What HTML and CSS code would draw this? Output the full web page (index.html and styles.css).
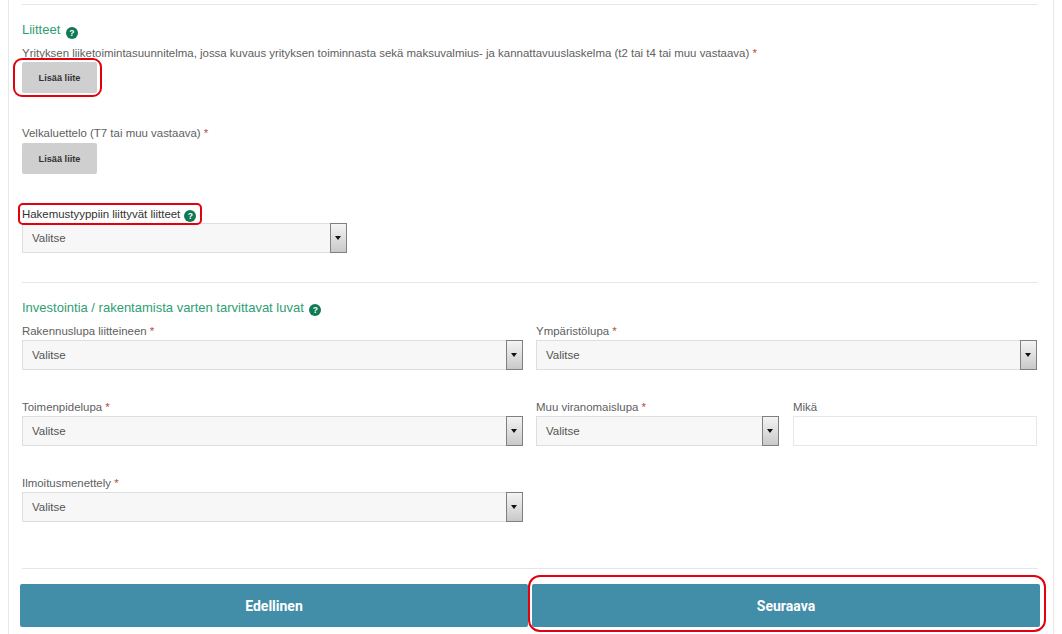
FILE: index.html
```html
<!DOCTYPE html>
<html lang="fi">
<head>
<meta charset="utf-8">
<title>Liitteet</title>
<link rel="stylesheet" href="styles.css">
</head>
<body>
<main class="card">
  <hr class="rule rule-top">
  <h2 class="heading heading-first">Liitteet <span class="help">?</span></h2>
  <div class="field-label">Yrityksen liiketoimintasuunnitelma, jossa kuvaus yrityksen toiminnasta sekä maksuvalmius- ja kannattavuuslaskelma (t2 tai t4 tai muu vastaava) <span class="req">*</span></div>
  <button class="add-btn marked" type="button">Lisää liite</button>
  <div class="field-label label-debt">Velkaluettelo (T7 tai muu vastaava) <span class="req">*</span></div>
  <button class="add-btn" type="button">Lisää liite</button>
  <div class="field-label label-type"><span class="marked-label">Hakemustyyppiin liittyvät liitteet <span class="help">?</span></span></div>
  <div class="select select-type"><span class="select-text">Valitse</span><span class="select-arrow"></span></div>
  <hr class="rule rule-mid">
  <h2 class="heading heading-second">Investointia / rakentamista varten tarvittavat luvat <span class="help">?</span></h2>
  <div class="grid">
    <div class="cell">
      <div class="field-label">Rakennuslupa liitteineen <span class="req">*</span></div>
      <div class="select"><span class="select-text">Valitse</span><span class="select-arrow"></span></div>
    </div>
    <div class="cell">
      <div class="field-label">Ympäristölupa <span class="req">*</span></div>
      <div class="select"><span class="select-text">Valitse</span><span class="select-arrow"></span></div>
    </div>
    <div class="cell">
      <div class="field-label">Toimenpidelupa <span class="req">*</span></div>
      <div class="select"><span class="select-text">Valitse</span><span class="select-arrow"></span></div>
    </div>
    <div class="cell split">
      <div>
        <div class="field-label">Muu viranomaislupa <span class="req">*</span></div>
        <div class="select"><span class="select-text">Valitse</span><span class="select-arrow"></span></div>
      </div>
      <div>
        <div class="field-label">Mikä</div>
        <div class="text-input"></div>
      </div>
    </div>
    <div class="cell">
      <div class="field-label">Ilmoitusmenettely <span class="req">*</span></div>
      <div class="select"><span class="select-text">Valitse</span><span class="select-arrow"></span></div>
    </div>
  </div>
  <hr class="rule rule-bottom">
  <div class="nav">
    <button class="nav-btn" type="button">Edellinen</button>
    <button class="nav-btn marked-next" type="button">Seuraava</button>
  </div>
</main>
</body>
</html>
```
FILE: styles.css
```css
* { box-sizing: border-box; }
html, body { margin: 0; height: 100%; background: #fff; overflow: hidden; }
body { font-family: "Liberation Sans", Arial, sans-serif; color: #555; }
.card {
  margin-left: 8px;
  width: 1046px;
  height: 634px;
  padding: 4px 15px 0 13px;
  border-left: 1px solid #e8e8e8;
  border-right: 1px solid #e8e8e8;
  overflow: hidden;
}
.rule { margin: 0; border: 0; border-top: 1px solid #e6e6e6; }
.heading {
  margin: 0;
  height: 16px;
  font-size: 13px;
  line-height: 16px;
  font-weight: 400;
  color: #2f9e73;
}
.heading-first { margin-top: 17px; }
.heading-second { margin-top: 17px; }
.help {
  display: inline-block;
  width: 12px;
  height: 12px;
  margin-left: 2px;
  border-radius: 50%;
  background: #107a55;
  color: #fff;
  font-size: 8.5px;
  line-height: 12px;
  font-weight: 700;
  text-align: center;
  vertical-align: -2px;
}
.heading-second .help { vertical-align: -1px; }
.marked-label .help { vertical-align: -1px; margin-left: 1px; }
.field-label {
  height: 14px;
  margin-bottom: 2px;
  font-size: 11.45px;
  line-height: 14px;
  color: #606060;
  white-space: nowrap;
}
.heading-first + .field-label { margin-top: 8px; }
.req { color: #b5473f; }
.label-debt { margin-top: 33px; margin-bottom: 3px; }
.label-type { margin-top: 33px; color: #333; }
.add-btn {
  display: block;
  width: 75px;
  height: 31px;
  padding: 0;
  border: 0;
  border-radius: 2px;
  background: #cfcfcf;
  color: #333;
  font: 700 9.2px "Liberation Sans", Arial, sans-serif;
  position: relative;
}
.marked::after {
  content: "";
  box-sizing: border-box;
  position: absolute;
  left: -9px;
  top: -4px;
  width: 89px;
  height: 39px;
  border: 2px solid #e3000f;
  border-radius: 9px;
}
.marked-label { position: relative; display: inline-block; height: 14px; }
.marked-label::after {
  content: "";
  position: absolute;
  left: -4px;
  top: -4px;
  right: -6px;
  bottom: -4px;
  border: 2px solid #e3000f;
  border-radius: 5px;
}
.select {
  display: flex;
  height: 30px;
  background: #f7f7f7;
  border: 1px solid #dedede;
  align-items: stretch;
}
.select-type { width: 325px; }
.select-text {
  flex: 1;
  padding-left: 9px;
  font-size: 11.5px;
  line-height: 28px;
  color: #555;
}
.select-arrow {
  position: relative;
  width: 17px;
  margin: -1px -1px -1px 0;
  border: 1px solid #808080;
  background: linear-gradient(#f4f4f4, #c9c9c9);
}
.select-arrow::after {
  content: "";
  position: absolute;
  left: 4px;
  top: 12px;
  border-left: 3.5px solid transparent;
  border-right: 3.5px solid transparent;
  border-top: 4px solid #111;
}
.rule-mid { margin-top: 29px; }
.grid {
  display: grid;
  grid-template-columns: 501px 501px;
  column-gap: 13px;
  row-gap: 30px;
  margin-top: 8px;
}
.split {
  display: grid;
  grid-template-columns: 243px 244px;
  column-gap: 14px;
}
.text-input {
  height: 30px;
  background: #fff;
  border: 1px solid #e6e6e6;
}
.rule-bottom { margin-top: 46px; }
.nav {
  display: flex;
  gap: 4px;
  margin: 15px -2px 0 -2px;
}
.nav-btn {
  flex: 1;
  height: 43px;
  padding: 0;
  border: 0;
  border-radius: 2px;
  background: #428da8;
  color: #fff;
  font: 700 14px Roboto, "Liberation Sans", sans-serif;
  position: relative;
}
.marked-next::after {
  content: "";
  position: absolute;
  left: -4px;
  top: -9px;
  right: -6px;
  bottom: -5px;
  border: 2px solid #e3000f;
  border-radius: 12px;
}
```
